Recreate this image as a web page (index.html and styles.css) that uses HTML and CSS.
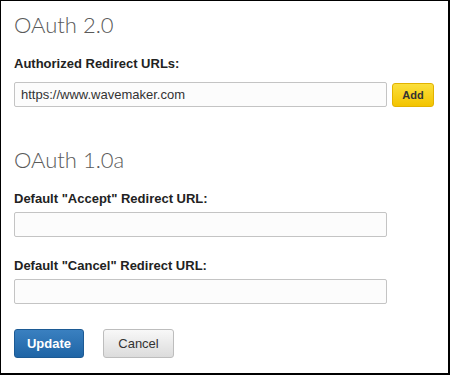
FILE: index.html
```html
<!DOCTYPE html>
<html lang="en">
<head>
  <meta charset="UTF-8" />
  <title>OAuth settings</title>
  <link rel="stylesheet" href="styles.css">
</head>
<body>
  <div class="frame">
    <!-- OAuth 2.0 -->
    <section class="block">
      <h2 class="title">OAuth 2.0</h2>
      <label class="label label-first">Authorized Redirect URLs:</label>
      <div class="row">
        <input class="field" type="text" value="https://www.wavemaker.com" />
        <button class="btn btn-add">Add</button>
      </div>
    </section>

    <!-- OAuth 1.0a -->
    <section class="block block-second">
      <h2 class="title">OAuth 1.0a</h2>
      <label class="label">Default "Accept" Redirect URL:</label>
      <input class="field" type="text" />
      <label class="label label-gap">Default "Cancel" Redirect URL:</label>
      <input class="field" type="text" />
    </section>

    <div class="actions">
      <button class="btn btn-update">Update</button>
      <button class="btn btn-cancel">Cancel</button>
    </div>
  </div>
</body>
</html>
```

FILE: styles.css
```css
*{box-sizing:border-box;}
html,body{margin:0;background:#fff;}
body{font-family:"Liberation Sans",Arial,sans-serif;color:#222;}

.frame{
  width:450px;
  height:375px;
  border:1px solid #000;
  border-right-width:2px;
  border-bottom-width:2px;
  padding:9px 13px 0;
}

.title{
  margin:0;
  font-family:Lato,"Open Sans",sans-serif;
  font-weight:300;
  font-size:22px;
  line-height:30px;
  color:#5a5a5a;
}

.label{
  display:block;
  margin:16px 0 6px;
  font-size:13px;
  font-weight:700;
  line-height:15px;
  color:#222;
}
.label-first{margin-bottom:11px;}
.label-gap{margin-top:21px;}

.row{display:flex;align-items:center;gap:5px;}

.field{
  display:block;
  width:373px;
  height:25px;
  padding:0 6px;
  border:1px solid #c4c4c4;
  border-radius:2px;
  background:#fcfcfc;
  font-family:"Liberation Sans",Arial,sans-serif;
  font-size:13px;
  color:#333;
  outline:none;
}

.block-second{margin-top:38px;}

.btn{
  font-family:"Liberation Sans",Arial,sans-serif;
  cursor:pointer;
  border-radius:3px;
}
.btn-add{
  width:42px;
  height:24px;
  padding:0;
  border:1px solid #e2b200;
  background:linear-gradient(#fbdf3c,#f3c400);
  font-size:11px;
  font-weight:700;
  color:#333;
}

.actions{display:flex;gap:19px;margin-top:25px;}
.btn-update{
  width:70px;
  height:29px;
  border:1px solid #1c5a94;
  background:linear-gradient(#3a80c0,#1f65a6);
  color:#fff;
  font-size:13px;
  font-weight:700;
}
.btn-cancel{
  width:71px;
  height:29px;
  border:1px solid #bdbdbd;
  background:linear-gradient(#f8f8f8,#dcdcdc);
  color:#333;
  font-size:13px;
}
```
